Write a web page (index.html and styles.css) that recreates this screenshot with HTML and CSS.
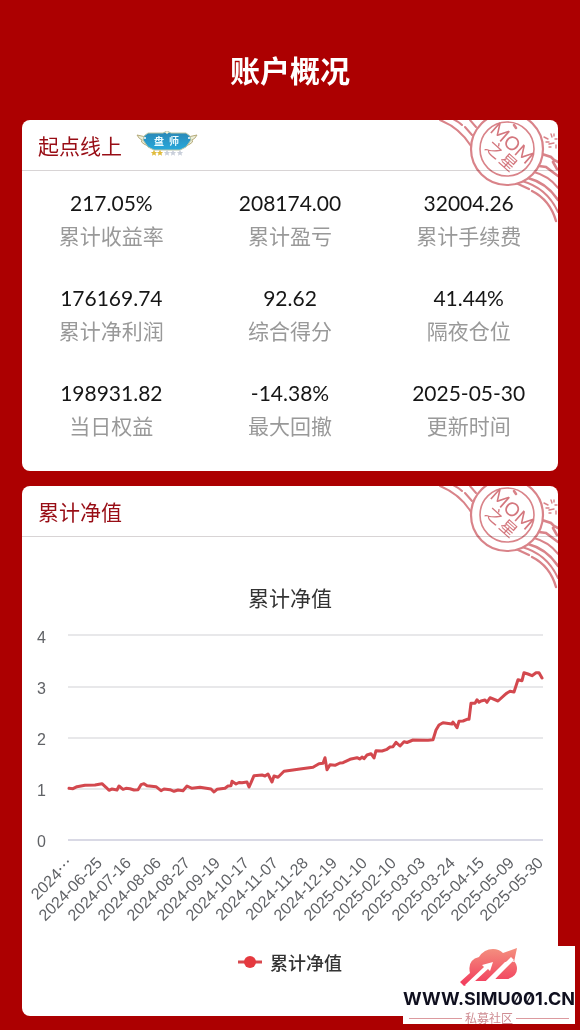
FILE: index.html
```html
<!DOCTYPE html>
<html lang="zh-CN">
<head>
<meta charset="utf-8">
<meta name="viewport" content="width=device-width, initial-scale=1">
<title>账户概况</title>
<link rel="stylesheet" href="styles.css">
</head>
<body>
<svg class="defs" width="0" height="0" aria-hidden="true">
  <defs>
    <symbol id="stamp" viewBox="0 0 140 110">
      <g fill="none" stroke="#d98389" stroke-linecap="round">
        <path d="M22 0Q42 8 53 26" stroke-width="2"/>
        <path d="M35 -1Q41 2 44 5M47 7L54 15" stroke-width="2"/>
        <path d="M52 0L58 7" stroke-width="2"/>
        <path d="M98 63L111 69M114 71Q132 80 138 101" stroke-width="2.4"/>
        <path d="M104 61Q129 68 140 92" stroke-width="2"/>
        <path d="M110 58Q129 63 140 80" stroke-width="2.4"/>
        <path d="M116 52Q131 56 140 68" stroke-width="2"/>
        <path d="M121 46L128 47L140 56" stroke-width="2.6"/>
        <path d="M124 34L133 37L136 40L140 42M135 42L139 49" stroke-width="2.6"/>
        <path d="M126 17l4 2m3-5l1 3m3 2h2m-8 5l5-1m-5 4h2m3-13v2m2 9v3M128 22h3" stroke-width="1.4"/>
        <circle cx="89" cy="29" r="36" fill="#fff" stroke-width="2.2"/>
        <circle cx="89" cy="29" r="27" stroke-width="1.6"/>
        <path d="M96 5l2 3" stroke-width="2.6"/>
      </g>
      <g class="stamp-text" transform="translate(89 29) rotate(42)" text-anchor="middle">
        <text class="stamp-latin" x="0" y="-1">MOM</text>
        <text class="stamp-cjk" x="-9" y="15">之</text>
        <text class="stamp-cjk" x="10" y="15">星</text>
      </g>
    </symbol>
    <path id="star" d="M0-3.2L1-1.1L3.1-.9L1.5.5L2 2.7L0 1.5L-2 2.7L-1.5.5L-3.1-.9L-1-1.1Z"/>
  </defs>
</svg>
<main class="page">
  <h1 class="page-title">账户概况</h1>

  <section class="card">
    <header class="card-head">
      <h2 class="card-title">起点线上</h2>
      <svg class="badge" viewBox="0 0 62 28" role="img" aria-label="盘师">
        <defs>
          <linearGradient id="badge-fill" x1="0" y1="0" x2="0" y2="1">
            <stop offset="0" stop-color="#2b86b4"/>
            <stop offset="1" stop-color="#27a9dc"/>
          </linearGradient>
        </defs>
        <path d="M10 6L1 4Q3 8 6 9Q4 11 8 13L12 15M52 6L61 4Q59 8 56 9Q58 11 54 13L50 15" fill="#eef0dc" stroke="#b5aa79"/>
        <path d="M12 2H27L31 0L35 2H50L54 5L55 9L50 16L44 19H18L12 16L7 9L8 5Z" fill="url(#badge-fill)" stroke="#bcc6a6"/>
        <path d="M29 1.500L31 0L33 1.500L31 3Z" fill="#fff4cf"/>
        <circle cx="9" cy="7" r="1" fill="#fff"/><circle cx="53" cy="7" r="1" fill="#fff"/>
        <text class="badge-text" x="23" y="14">盘</text>
        <text class="badge-text" x="38" y="14">师</text>
        <g fill="#e0bb3c"><use href="#star" x="18" y="22"/><use href="#star" x="24" y="22"/></g>
        <g fill="#c9cfda"><use href="#star" x="31" y="22"/><use href="#star" x="37" y="22"/><use href="#star" x="44" y="22"/></g>
      </svg>
    </header>
    <svg class="stamp" aria-hidden="true"><use href="#stamp"/></svg>
    <dl class="stats">
      <div class="stat"><dt>累计收益率</dt><dd>217.05%</dd></div>
      <div class="stat"><dt>累计盈亏</dt><dd>208174.00</dd></div>
      <div class="stat"><dt>累计手续费</dt><dd>32004.26</dd></div>
      <div class="stat"><dt>累计净利润</dt><dd>176169.74</dd></div>
      <div class="stat"><dt>综合得分</dt><dd>92.62</dd></div>
      <div class="stat"><dt>隔夜仓位</dt><dd>41.44%</dd></div>
      <div class="stat"><dt>当日权益</dt><dd>198931.82</dd></div>
      <div class="stat"><dt>最大回撤</dt><dd>-14.38%</dd></div>
      <div class="stat"><dt>更新时间</dt><dd>2025-05-30</dd></div>
    </dl>
  </section>

  <section class="card">
    <header class="card-head">
      <h2 class="card-title">累计净值</h2>
    </header>
    <svg class="stamp" aria-hidden="true"><use href="#stamp"/></svg>
    <figure class="chart">
      <figcaption class="chart-title">累计净值</figcaption>
      <svg class="plot" viewBox="0 0 536 320" role="img" aria-label="累计净值">
        <path class="grid-line" d="M46 21H521M46 73H521M46 124H521M46 175H521"/>
        <path class="axis-line" d="M46 226H521"/>
        <g class="tick-y">
          <text x="24" y="29">4</text>
          <text x="24" y="80">3</text>
          <text x="24" y="131">2</text>
          <text x="24" y="182">1</text>
          <text x="24" y="233">0</text>
        </g>
        <g class="tick-x">
          <text transform="translate(52 250) rotate(-45)">2024<tspan class="dots">…</tspan></text>
          <text transform="translate(81 250) rotate(-45)">2024-06-25</text>
          <text transform="translate(110 250) rotate(-45)">2024-07-16</text>
          <text transform="translate(140 250) rotate(-45)">2024-08-06</text>
          <text transform="translate(169 250) rotate(-45)">2024-08-27</text>
          <text transform="translate(199 250) rotate(-45)">2024-09-19</text>
          <text transform="translate(228 250) rotate(-45)">2024-10-17</text>
          <text transform="translate(257 250) rotate(-45)">2024-11-07</text>
          <text transform="translate(287 250) rotate(-45)">2024-11-28</text>
          <text transform="translate(316 250) rotate(-45)">2024-12-19</text>
          <text transform="translate(346 250) rotate(-45)">2025-01-10</text>
          <text transform="translate(375 250) rotate(-45)">2025-02-10</text>
          <text transform="translate(404 250) rotate(-45)">2025-03-03</text>
          <text transform="translate(434 250) rotate(-45)">2025-03-24</text>
          <text transform="translate(463 250) rotate(-45)">2025-04-15</text>
          <text transform="translate(493 250) rotate(-45)">2025-05-09</text>
          <text transform="translate(522 250) rotate(-45)">2025-05-30</text>
        </g>
        <polyline class="series" transform="translate(-22 -614)" points="69,788.3 73,788.7 77,786.7 85,785.3 95,785 102,783.7 106,787.3 109,790.3 112,789 117,790 119,786 123,789.3 126,788.3 130,788.7 134,790 138,789.7 141,784.7 144,783.7 147,785.7 156,786.7 161,790.7 164,789 170,789.7 174,791.3 178,790 183,790.7 187,786 192,788.3 200,787.3 211,789 214,792 217,789.3 225,788.3 228,786 231,785.7 232,781.3 236,784 239,782.5 242,782.7 247,782 249,787 251,782.7 254,775.7 262,775 265,776 268,774 272,782 274,776 278,777.3 284,771.3 293,770 300,769 313,767.3 319,763.7 323,763.3 325,757.7 327,769.7 330,764.7 335,765.3 340,763 343,762.7 350,759.3 357,757.7 360,759 362,757 364,758.7 367,755 371,753.7 374,758 376,750.7 382,751 387,749.3 390,747 393,746.7 396,742.3 400,746 404,741.7 407,742.5 413,740 428,740.3 433,739.7 436,730 439,725 443,722.7 452,724 453,722 457,727.7 459,721.3 463,721 467,719.3 469,719.3 471,703.3 475,703.3 477,699.7 479,702.3 481,701 485,700 487,702.3 490,697.7 498,701 505,694.7 507,693 510,691.3 514,692 518,679.7 522,680.7 524,672.7 528,674 532,675.7 536,672.7 539,672.7 542,678"/>
      </svg>
      <div class="legend">
        <svg class="legend-mark" viewBox="0 0 24 12" aria-hidden="true"><path d="M0 6H24" stroke="#d8484e" stroke-width="3"/><circle cx="12" cy="6" r="6" fill="#e5393f"/></svg>
        <span>累计净值</span>
      </div>
    </figure>
  </section>

  <aside class="brand">
    <svg class="brand-logo" viewBox="0 0 58 38" aria-hidden="true">
      <defs>
        <linearGradient id="cloud" x1="0" y1="0" x2="0" y2="1">
          <stop offset="0" stop-color="#f4907f"/>
          <stop offset="1" stop-color="#f23a5c"/>
        </linearGradient>
      </defs>
      <path fill="url(#cloud)" d="M0 34L10 25Q7 12 19 9Q24 1 33 1Q39 1 43 5L57 0L54 14L51 13L35 31H48Q57 28 57 21Q57 16 54 13L45 14L26 33H15L4 38Z"/>
      <path fill="#fff" d="M5 37L24 19L22 17L33 14L30 23L28 21L15 33L11 38ZM25 34L47 13L51 9L54 12L35 31L32 34Z"/>
    </svg>
    <div class="brand-name">WWW.SIMU001.CN</div>
    <div class="brand-sub">私募社区</div>
  </aside>
</main>
</body>
</html>
```
FILE: styles.css
```css
* { box-sizing: border-box; }

body {
  margin: 0;
  background: #ac0001;
  font-family: "Liberation Sans", "Noto Sans CJK SC", sans-serif;
}

h1, h2, dl, dd, figure { margin: 0; }

.defs { position: absolute; }

.page {
  position: relative;
  display: flex;
  flex-direction: column;
  gap: 15px;
  padding: 48px 22px 13px;
}

.page-title {
  margin-bottom: 13px;
  color: #fff;
  font-family: "Noto Sans CJK SC", sans-serif;
  font-size: 30px;
  font-weight: 700;
  line-height: 42px;
  padding-bottom: 2px;
  text-align: center;
}

.card {
  position: relative;
  overflow: hidden;
  border-radius: 8px;
  background: #fff;
}

.card-head {
  display: flex;
  align-items: center;
  gap: 14px;
  height: 51px;
  padding: 0 16px;
  border-bottom: 1px solid #d8d4d5;
}

.card-title {
  color: #980d15;
  font-family: "Noto Sans CJK SC", sans-serif;
  font-size: 21px;
  font-weight: 400;
  line-height: 32px;
}

.badge { width: 62px; height: 28px; }

.badge-text {
  fill: #e9fbff;
  font-family: "Noto Sans CJK SC", sans-serif;
  font-size: 10px;
  font-weight: 700;
  text-anchor: middle;
}

.stamp {
  position: absolute;
  top: 0;
  right: 0;
  width: 140px;
  height: 110px;
  mix-blend-mode: multiply;
}

.stamp-text { fill: #d4777e; }
.stamp-latin { font-family: Lato, sans-serif; font-size: 19px; }
.stamp-cjk { font-family: "Noto Sans CJK SC", sans-serif; font-size: 17px; }

.stats {
  display: grid;
  grid-template-columns: repeat(3, 1fr);
  row-gap: 31px;
  padding: 16px 0 30px;
}

.stat {
  display: flex;
  flex-direction: column-reverse;
  text-align: center;
  line-height: 32px;
}

.stat dt {
  color: #999;
  font-family: "Noto Sans CJK SC", sans-serif;
  font-size: 21px;
  font-weight: 400;
}

.stat dd {
  color: #161616;
  font-family: Lato, sans-serif;
  font-size: 21px;
}

.chart { padding: 45px 0 39px; }

.chart-title {
  color: #333;
  font-family: "Noto Sans CJK SC", sans-serif;
  font-size: 21px;
  line-height: 30px;
  padding-bottom: 2px;
  text-align: center;
}

.plot { display: block; width: 100%; }
.grid-line { stroke: #e8e8ea; stroke-width: 2; }
.axis-line { stroke: #d9d9e5; stroke-width: 2; }
.tick-y, .tick-x { fill: #606266; font-size: 16px; text-anchor: end; }
.dots { font-family: "Noto Sans CJK SC", sans-serif; }

.series {
  fill: none;
  stroke: #d3484e;
  stroke-width: 3;
  stroke-linejoin: round;
  stroke-linecap: round;
}

.legend {
  display: flex;
  align-items: center;
  justify-content: center;
  gap: 8px;
  margin-top: 13px;
  color: #333;
  font-family: "Noto Sans CJK SC", sans-serif;
  font-size: 18px;
  font-weight: 500;
  line-height: 30px;
}

.legend-mark { width: 24px; height: 12px; }

.brand {
  position: absolute;
  right: 5px;
  bottom: 5px;
  display: flex;
  flex-direction: column;
  align-items: center;
  width: 172px;
  height: 78px;
  padding-top: 2px;
  background: #fff;
}

.brand-logo { width: 58px; height: 38px; }

.brand-name {
  color: #10101f;
  font-family: Inter, sans-serif;
  font-size: 18px;
  font-weight: 700;
  font-feature-settings: "zero";
  line-height: 26px;
}

.brand-sub {
  display: flex;
  align-items: center;
  gap: 3px;
  align-self: stretch;
  padding: 0 6px;
  color: #cf8d93;
  font-family: "Noto Sans CJK SC", sans-serif;
  font-size: 12px;
  line-height: 12px;
}

.brand-sub::before, .brand-sub::after {
  content: "";
  flex: 1;
  border-top: 1px solid #dc9a9f;
}
```
